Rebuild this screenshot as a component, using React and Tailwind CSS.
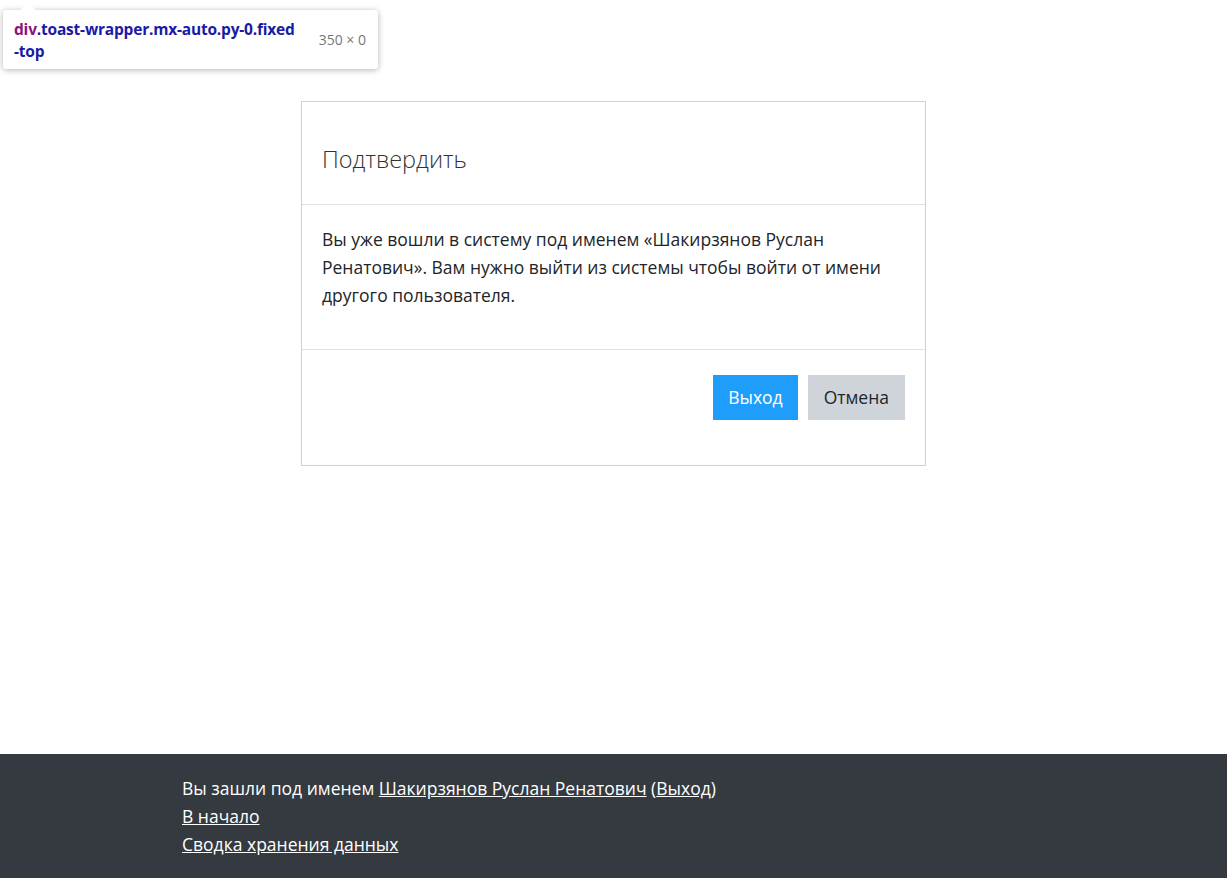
import React from "react";

export default function App() {
  return (
    <div className="min-h-[878px] flex flex-col bg-white text-[#212529] font-['Open_Sans',sans-serif]">
      {/* devtools element tooltip */}
      <div className="absolute left-[3px] top-[10px] w-[375px] h-[59px] bg-white rounded-[3px] shadow-[0_1px_6px_rgba(0,0,0,0.3)] flex items-start justify-between pl-[11px] pr-[12px] pt-[8px]">
        <div className="absolute -top-[8px] left-[16px] w-0 h-0 border-l-[9px] border-r-[9px] border-b-[9px] border-l-transparent border-r-transparent border-b-white" />
        <div className="text-[15.5px] leading-[22px] font-bold tracking-[-0.2px]">
          <span className="text-[#881280]">div</span>
          <span className="text-[#1a1aa6]">.toast-wrapper.mx-auto.py-0.fixed</span>
          <br />
          <span className="text-[#1a1aa6]">-top</span>
        </div>
        <div className="text-[14px] text-[#777] pt-[11px]">350 × 0</div>
      </div>

      <main className="flex-1 flex justify-center pt-[101px]">
        <div className="w-[625px] h-[365px] border border-[#cfcfcf] flex flex-col">
          <div className="h-[103px] border-b border-[#dee2e6] px-[20px] pt-[43px]">
            <h5 className="text-[23.5px] leading-[28px] font-light text-[#333]">Подтвердить</h5>
          </div>
          <div className="h-[145px] border-b border-[#dee2e6] px-[20px] pt-[20px]">
            <p className="text-[17.5px] leading-[28px]">
              Вы уже вошли в систему под именем «Шакирзянов Руслан Ренатович». Вам нужно выйти из системы чтобы войти от имени другого пользователя.
            </p>
          </div>
          <div className="flex justify-end gap-[10px] px-[20px] pt-[25px]">
            <button className="h-[45px] px-[15px] bg-[#1f9dfb] text-white text-[17.5px]">Выход</button>
            <button className="h-[45px] px-[16px] bg-[#ced4da] text-[#212529] text-[17.5px]">Отмена</button>
          </div>
        </div>
      </main>

      <footer className="h-[124px] bg-[#343a40] text-white text-[17.5px] leading-[28px] pl-[182px] pt-[20px]">
        <div>
          Вы зашли под именем <a className="underline">Шакирзянов Руслан Ренатович</a> (<a className="underline">Выход</a>)
        </div>
        <div>
          <a className="underline">В начало</a>
        </div>
        <div>
          <a className="underline">Сводка хранения данных</a>
        </div>
      </footer>
    </div>
  );
}
